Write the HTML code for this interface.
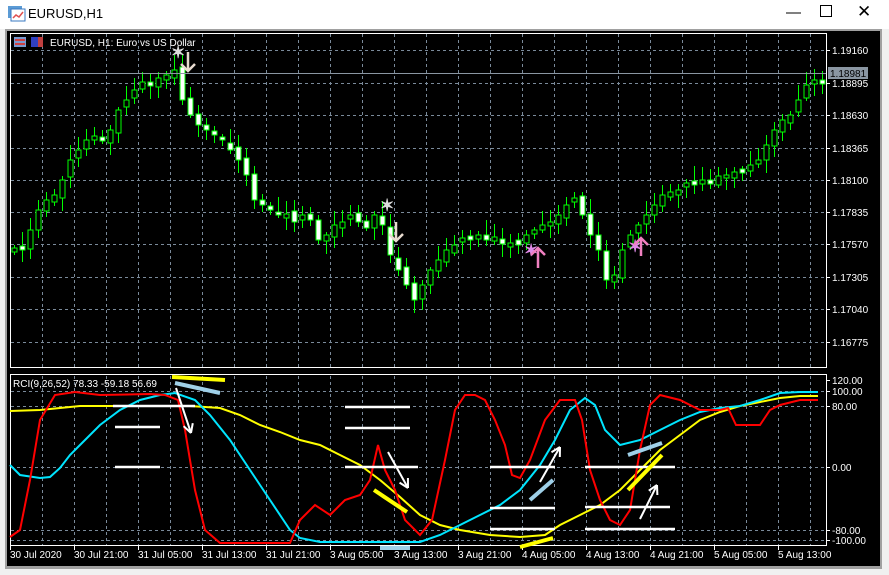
<!DOCTYPE html>
<html><head><meta charset="utf-8"><style>
html,body{margin:0;padding:0;width:889px;height:575px;overflow:hidden;background:#fff;font-family:"Liberation Sans",sans-serif}
#tb{position:absolute;left:0;top:0;width:889px;height:30px;background:#fff}
#tt{position:absolute;left:28px;top:6px;font-size:13px;color:#000}
.btn{position:absolute;top:4px;font-size:15px;color:#000}
svg{position:absolute;left:0;top:0}
</style></head><body>
<div id="tb">
<svg width="24" height="24" style="left:6px;top:4px"><rect x="2" y="2" width="14" height="12" fill="#5b9bd5"/><rect x="5" y="5" width="14" height="12" fill="#fff" stroke="#3a78c2"/><polyline points="7,14 10,11 13,13 17,8" stroke="#e05050" fill="none" stroke-width="1.5"/></svg>
<div id="tt">EURUSD,H1</div>
<div class="btn" style="left:786px">&#8212;</div>
<div class="btn" style="left:820px;top:5px"><div style="width:10px;height:10px;border:1px solid #000"></div></div>
<div class="btn" style="left:857px;font-size:17px;top:2px">&#10005;</div>
</div>
<svg id="s" width="889" height="575" style="top:0">
<rect x="0" y="29" width="889" height="546" fill="#f0f0f0"/>
<rect x="5" y="29" width="877" height="540" fill="#a0a0a0"/>
<rect x="7" y="31" width="873" height="535" fill="#000"/>
<g id="g"></g>
</svg>
<script>
const NS="http://www.w3.org/2000/svg",g=document.getElementById('g');
function el(t,a,txt){const e=document.createElementNS(NS,t);for(const k in a)e.setAttribute(k,a[k]);if(txt!==undefined)e.textContent=txt;g.appendChild(e);return e;}
for(let x=42;x<826;x+=32){el('line',{x1:x+.5,y1:34,x2:x+.5,y2:367,stroke:'#7a8a9a','stroke-dasharray':'3,3'});el('line',{x1:x+.5,y1:376,x2:x+.5,y2:545,stroke:'#7a8a9a','stroke-dasharray':'3,3'});}
const pl=[[50,'1.19160'],[83,'1.18895'],[115,'1.18630'],[148,'1.18365'],[180,'1.18100'],[212,'1.17835'],[244,'1.17570'],[277,'1.17305'],[309,'1.17040'],[342,'1.16775']];
pl.forEach(p=>{el('line',{x1:11,y1:p[0]+.5,x2:826,y2:p[0]+.5,stroke:'#7a8a9a','stroke-dasharray':'3,3'});el('line',{x1:826,y1:p[0]+.5,x2:830,y2:p[0]+.5,stroke:'#fff'});el('text',{x:832,y:p[0]+4,fill:'#fff','font-size':'10'},p[1]);});
const il=[[380,'120.00',0],[391,'100.00',1],[406,'80.00',1],[467,'0.00',1],[530,'-80.00',1],[540,'-100.00',1]];
il.forEach(p=>{if(p[2])el('line',{x1:11,y1:p[0]+.5,x2:826,y2:p[0]+.5,stroke:'#7a8a9a','stroke-dasharray':'3,3'});el('line',{x1:826,y1:p[0]+.5,x2:830,y2:p[0]+.5,stroke:'#fff'});el('text',{x:832,y:p[0]+4,fill:'#fff','font-size':'10'},p[1]);});
el('rect',{x:10.5,y:33.5,width:816,height:334,fill:'none',stroke:'#fff'});
el('rect',{x:10.5,y:374.5,width:816,height:171,fill:'none',stroke:'#fff'});
const tl=['30 Jul 2020','30 Jul 21:00','31 Jul 05:00','31 Jul 13:00','31 Jul 21:00','3 Aug 05:00','3 Aug 13:00','3 Aug 21:00','4 Aug 05:00','4 Aug 13:00','4 Aug 21:00','5 Aug 05:00','5 Aug 13:00'];
tl.forEach((t,i)=>{const x=10+i*64;el('line',{x1:x+.5,y1:546,x2:x+.5,y2:550,stroke:'#fff'});el('text',{x:x,y:558,fill:'#fff','font-size':'10'},t);});
const c=[250,245,230,210,200,195,180,160,150,140,138,135,130,110,100,90,82,80,78,75,70,100,115,125,130,135,140,150,160,175,200,205,210,215,218,222,215,220,240,235,225,222,220,222,228,215,225,255,270,285,300,285,270,260,250,245,240,238,240,240,242,244,245,245,235,230,225,222,215,205,200,215,235,250,280,275,250,235,225,215,205,195,192,190,188,182,180,178,176,175,172,170,165,160,145,130,120,115,100,85,80,78];
let prev=255;
c.forEach((y,i)=>{const x=14+i*8;const n=((i*29)%7)-3;const o=prev+n;let cl=y;if(Math.abs(o-cl)<3)cl=o+(i%2?4:-4);const top=Math.min(o,cl),bot=Math.max(o,cl);const w=((i*37)%13)+3;
el('line',{x1:x+.5,y1:top-w,x2:x+.5,y2:bot+((i*53)%11)+3,stroke:'#00ff00'});
const up=cl<o;el('rect',{x:x-2,y:top,width:5,height:Math.max(bot-top,1),fill:up?'#000':'#fff',stroke:'#00ff00'});prev=cl;});
el('line',{x1:11,y1:73.5,x2:826,y2:73.5,stroke:'#8a96a2'});
el('rect',{x:828,y:67,width:40,height:12,fill:'#8a96a2'});el('text',{x:830,y:77,fill:'#000','font-size':'10'},'1.18981');
el('rect',{x:14,y:37,width:12,height:10,fill:'#7a9ad0'});el('rect',{x:15,y:39,width:10,height:2,fill:'#d04040'});el('rect',{x:15,y:43,width:10,height:2,fill:'#d04040'});
el('rect',{x:31,y:37,width:12,height:10,fill:'#3040c0'});el('rect',{x:38,y:37,width:5,height:10,fill:'#c04040'});
el('text',{x:50,y:46,fill:'#fff','font-size':'10'},'EURUSD, H1:  Euro vs US Dollar');
el('text',{x:13,y:387,fill:'#fff','font-size':'10'},'RCI(9,26,52) 78.33 -59.18 56.69');
function star(x,y,col){el('text',{x:x-6,y:y+6,fill:col,'font-size':'17','font-weight':'bold'},'\u2736');}
star(177,52,'#ddd');star(386,205,'#ddd');star(530,250,'#e08ae8');star(634,246,'#e08ae8');
function arr(x,y1,y2,col){el('line',{x1:x,y1:y1,x2:x,y2:y2,stroke:col,'stroke-width':2.5});const d=y2>y1?-1:1;el('polyline',{points:`${x-7},${y2+7*d} ${x},${y2} ${x+7},${y2+7*d}`,fill:'none',stroke:col,'stroke-width':2.5});}
arr(188,52,71,'#e8dcd0');arr(396,222,241,'#e8dcd0');arr(538,268,248,'#f080c0');arr(641,256,238,'#f080c0');
function line(pts,col){el('polyline',{points:pts.map(p=>p.join(',')).join(' '),fill:'none',stroke:col,'stroke-width':2});}
line([[10,411],[40,410],[80,406],[130,406],[190,406],[220,408],[240,415],[260,425],[280,432],[300,440],[320,445],[340,455],[360,465],[380,480],[400,497],[420,515],[440,525],[460,530],[490,535],[520,537],[545,535],[560,525],[580,515],[600,505],[620,490],[640,470],[660,450],[680,435],[700,420],[720,412],[740,406],[760,402],[780,398],[800,396],[818,396]],'#ffff00');
line([[10,465],[20,475],[40,478],[50,477],[60,468],[70,455],[80,445],[100,425],[120,410],[140,400],[160,395],[175,393],[195,400],[210,415],[230,440],[250,470],[270,500],[290,530],[300,538],[320,542],[420,542],[440,535],[460,525],[480,515],[500,505],[520,490],[540,465],[555,440],[570,410],[585,398],[595,405],[605,430],[620,445],[640,440],[660,430],[680,420],[700,412],[720,408],[740,406],[760,400],[780,393],[800,392],[818,392]],'#00e5ff');
line([[10,537],[20,530],[30,480],[40,420],[55,395],[75,392],[100,395],[150,394],[165,395],[178,400],[185,430],[195,490],[205,530],[220,543],[290,543],[300,520],[315,505],[330,515],[345,500],[360,495],[370,480],[378,445],[385,470],[395,490],[405,520],[420,535],[432,520],[445,460],[455,410],[465,395],[475,395],[485,400],[495,420],[505,445],[512,475],[520,478],[530,460],[545,420],[560,400],[575,400],[582,420],[590,470],[600,500],[610,520],[620,525],[630,510],[640,450],[650,405],[660,395],[680,400],[700,410],[720,410],[728,408],[736,425],[760,425],[770,410],[780,405],[800,400],[818,400]],'#ff0000');
function L(a,b,c2,d,col,w){el('line',{x1:a,y1:b,x2:c2,y2:d,stroke:col,'stroke-width':w});}
[[115,427,160,427],[115,467,160,467],[113,406,195,406],[345,407,410,407],[345,428,410,428],[345,467,418,467],[490,467,555,467],[490,508,555,508],[490,529,555,529],[585,467,675,467],[585,507,670,507],[585,529,675,529]].forEach(a=>L(...a,'#fff',2.5));
L(172,377,225,380,'#ffff00',4);L(374,490,407,512,'#ffff00',4);L(520,547,553,538,'#ffff00',4);L(628,490,662,455,'#ffff00',4);
L(175,383,220,393,'#9fd0e8',4);L(380,548,410,548,'#9fd0e8',4);L(530,500,553,480,'#9fd0e8',4);L(628,455,662,443,'#9fd0e8',4);
function A(x1,y1,x2,y2){L(x1,y1,x2,y2,'#fff',2);const an=Math.atan2(y2-y1,x2-x1);[0.5,-0.5].forEach(s=>{L(x2,y2,x2-10*Math.cos(an+s),y2-10*Math.sin(an+s),'#fff',2);});}
A(176,388,191,433);A(388,452,408,488);A(540,482,560,447);A(640,519,657,485);
</script>
</body></html>
